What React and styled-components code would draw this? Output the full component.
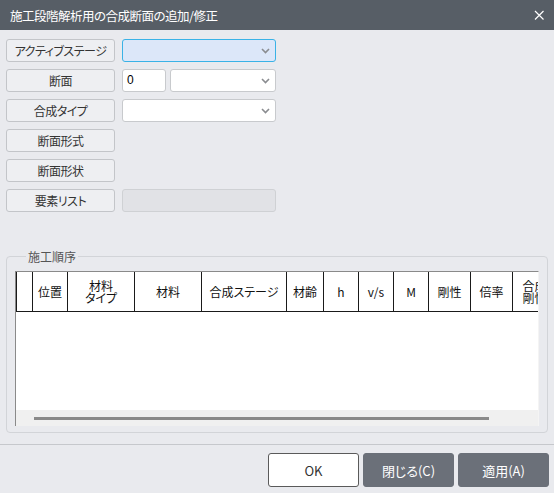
import React from "react";
import styled, { createGlobalStyle } from "styled-components";

const Global = createGlobalStyle`
  html, body { margin: 0; padding: 0; background: #e9eaee; }
  body { font-family: "Noto Sans CJK JP", "Noto Sans", sans-serif; }
  * { box-sizing: border-box; }
`;

const Dialog = styled.div`
  width: 554px;
  height: 493px;
  display: flex;
  flex-direction: column;
  background: #e9eaee;
  overflow: hidden;
`;

const TitleBar = styled.div`
  height: 30px;
  background: #575e66;
  display: flex;
  align-items: center;
  justify-content: space-between;
  padding: 0 9px 0 10px;
  color: #fff;
  font-size: 12.5px;
  letter-spacing: -0.5px;
  font-feature-settings: "palt";
`;

const CloseBtn = styled.div`
  width: 12px;
  height: 12px;
  display: flex;
`;

const Form = styled.div`
  display: flex;
  flex-direction: column;
  gap: 7px;
  padding: 9px 0 0 6px;
`;

const Row = styled.div`
  display: flex;
  align-items: center;
  gap: 7px;
  height: 23px;
`;

const LabelBtn = styled.div`
  width: 109px;
  height: 23px;
  border: 1px solid #c3c5c9;
  border-radius: 3px;
  background: #eeeff2;
  color: #333;
  font-size: 12px;
  letter-spacing: -0.5px;
  font-feature-settings: "palt";
  display: flex;
  align-items: center;
  justify-content: center;
`;

const Combo = styled.div`
  width: ${(p) => p.$w || 154}px;
  height: 23px;
  border: 1px solid ${(p) => (p.$active ? "#3ab2e6" : "#c8cacd")};
  background: ${(p) => (p.$active ? "#dce7f9" : "#fff")};
  border-radius: 3px;
  display: flex;
  align-items: center;
  justify-content: flex-end;
  padding-right: 5px;
`;

const TextBox = styled.div`
  width: ${(p) => p.$w}px;
  height: 23px;
  border: 1px solid #c8cacd;
  background: #fff;
  border-radius: 3px;
  font-size: 12px;
  color: #000;
  padding: 0 0 2px 4px;
  display: flex;
  align-items: center;
  font-family: "Liberation Sans", sans-serif;
`;

const Pair = styled.div`
  display: flex;
  gap: 4px;
`;

const ReadOnly = styled.div`
  width: 154px;
  height: 23px;
  border: 1px solid #cfd1d4;
  background: #e1e2e6;
  border-radius: 3px;
`;

const Group = styled.fieldset`
  margin: 37px 6px 0 6px;
  padding: 7px 8px 6px 9px;
  border: 1px solid #d2d4d8;
  border-radius: 4px;
  min-width: 0;
`;

const Legend = styled.legend`
  padding: 0 2px;
  margin-left: 10px;
  font-size: 12px;
  color: #555;
  line-height: 15px;
`;

const TableWrap = styled.div`
  height: 155px;
  border-left: 1px solid #8a8a8a;
  border-top: 1px solid #8a8a8a;
  border-right: 1px solid #f4f4f4;
  background: #fff;
  display: flex;
  flex-direction: column;
  overflow: hidden;
  margin-left: -1px;
`;

const HeaderRow = styled.div`
  display: flex;
  height: 40px;
  flex-shrink: 0;
`;

const HeadCell = styled.div`
  flex: 0 0 ${(p) => p.$w}px;
  width: ${(p) => p.$w}px;
  height: 40px;
  border-right: 1px solid #1a1a1a;
  border-bottom: 1px solid #1a1a1a;
  border-left: ${(p) => (p.$first ? "1px solid #1a1a1a" : "none")};
  font-size: 12px;
  line-height: 12px;
  color: #111;
  display: flex;
  align-items: center;
  justify-content: center;
  text-align: center;
  font-feature-settings: "palt";
  white-space: pre;
  overflow: hidden;
`;

const Body = styled.div`
  flex: 1;
  background: #fff;
`;

const ScrollBar = styled.div`
  height: 16px;
  background: #f0f0f0;
  display: flex;
  align-items: center;
  padding-left: 18px;
`;

const Thumb = styled.div`
  width: 455px;
  height: 3px;
  background: #8a8a8a;
`;

const Footer = styled.div`
  margin-top: 11px;
  border-top: 1px solid #c6c8cc;
  display: flex;
  justify-content: flex-end;
  gap: 4px;
  padding: 8px 5px 0 0;
`;

const Btn = styled.div`
  width: ${(p) => p.$w}px;
  height: 34px;
  border-radius: 3px;
  border: 1px solid ${(p) => (p.$primary ? "#5a5a5a" : "#6b7079")};
  background: ${(p) => (p.$primary ? "#fff" : "#6b7079")};
  color: ${(p) => (p.$primary ? "#333" : "#fff")};
  font-size: 13px;
  display: flex;
  align-items: center;
  justify-content: center;
  font-feature-settings: "palt";
`;

const Chevron = () => (
  <svg width="9" height="6" viewBox="0 0 9 6">
    <path d="M1 1 L4.5 4.5 L8 1" fill="none" stroke="#8a8c90" strokeWidth="1.6" />
  </svg>
);

const cols = [
  { w: 17, t: "", first: true },
  { w: 35, t: "位置" },
  { w: 67, t: "材料\nタイプ" },
  { w: 67, t: "材料" },
  { w: 85, t: "合成ステージ" },
  { w: 37, t: "材齢" },
  { w: 35, t: "h" },
  { w: 35, t: "v/s" },
  { w: 35, t: "M" },
  { w: 42, t: "剛性" },
  { w: 42, t: "倍率" },
  { w: 44, t: "合成\n剛性" },
];

export default function App() {
  return (
    <>
      <Global />
      <Dialog>
        <TitleBar>
          <span>施工段階解析用の合成断面の追加/修正</span>
          <CloseBtn>
            <svg width="12" height="12" viewBox="0 0 12 12">
              <path d="M2 2 L10.5 10.5 M10.5 2 L2 10.5" stroke="#fff" strokeWidth="1.2" />
            </svg>
          </CloseBtn>
        </TitleBar>
        <Form>
          <Row>
            <LabelBtn>アクティブステージ</LabelBtn>
            <Combo $active>
              <Chevron />
            </Combo>
          </Row>
          <Row>
            <LabelBtn>断面</LabelBtn>
            <Pair>
              <TextBox $w={44}>0</TextBox>
              <Combo $w={106}>
                <Chevron />
              </Combo>
            </Pair>
          </Row>
          <Row>
            <LabelBtn>合成タイプ</LabelBtn>
            <Combo>
              <Chevron />
            </Combo>
          </Row>
          <Row>
            <LabelBtn>断面形式</LabelBtn>
          </Row>
          <Row>
            <LabelBtn>断面形状</LabelBtn>
          </Row>
          <Row>
            <LabelBtn>要素リスト</LabelBtn>
            <ReadOnly />
          </Row>
        </Form>
        <Group>
          <Legend>施工順序</Legend>
          <TableWrap>
            <HeaderRow>
              {cols.map((c, i) => (
                <HeadCell key={i} $w={c.w} $first={c.first}>
                  {c.t}
                </HeadCell>
              ))}
            </HeaderRow>
            <Body />
            <ScrollBar>
              <Thumb />
            </ScrollBar>
          </TableWrap>
        </Group>
        <Footer>
          <Btn $w={91} $primary>OK</Btn>
          <Btn $w={91}>閉じる(C)</Btn>
          <Btn $w={91}>適用(A)</Btn>
        </Footer>
      </Dialog>
    </>
  );
}
